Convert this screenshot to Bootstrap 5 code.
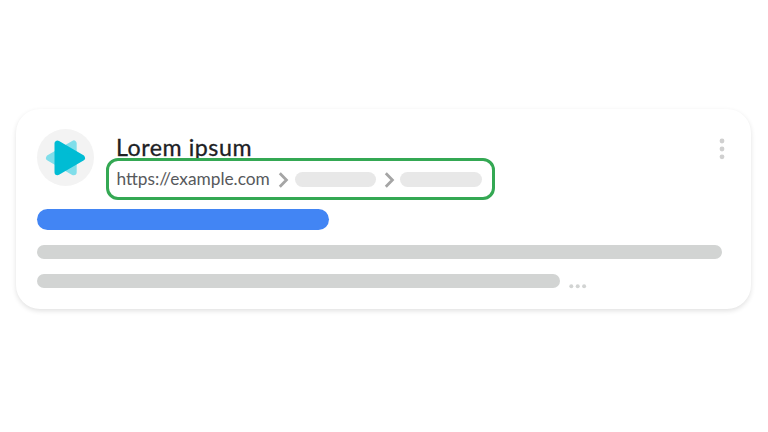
<!DOCTYPE html>
<html lang="en">
<head>
<meta charset="utf-8">
<meta name="viewport" content="width=device-width, initial-scale=1">
<title>Search result</title>
<link href="https://cdn.jsdelivr.net/npm/bootstrap@5.3.0/dist/css/bootstrap.min.css" rel="stylesheet">
<style>
body{font-family:Lato,"Liberation Sans",sans-serif;background:#fff;padding:109px 0 0 16px}
.result{width:735px;height:200px;border-radius:24px;padding:20px 22px 0 21.4px;box-shadow:0 2px 5px rgba(0,0,0,.12)}
.favicon{width:57px;height:57px;background:#f3f3f3}
.site{width:389px;margin-left:11.6px;height:80px}
.site-name{font-size:23.2px;line-height:28px;height:29px;padding:4px 0 0 10px;color:#202124;letter-spacing:.55px;-webkit-text-stroke:.3px #202124}
.crumbs{height:42px;border:3px solid #34a853;border-radius:12px;padding-left:7.5px}
.url{font-size:17.3px;line-height:20px;color:#57595c;width:154.5px;white-space:nowrap}
.sep{margin:2px 5.5px 0 7.5px}
.crumb{width:81.5px;height:15px;background:#e8e8e8;margin-top:1px}
.kebab{margin:9px 4.5px 0 0}
.heading-bar{width:291.5px;height:21px;background:#4285f4}
.line-bar{height:14px;background:#d2d4d3}
.line-one{width:684.5px;margin-top:15px}
.line-two{width:523px}
.line-row{margin-top:15px}
.more{margin:10px 0 0 9px}
</style>
<script src="https://cdn.jsdelivr.net/npm/bootstrap@5.3.0/dist/js/bootstrap.bundle.min.js"></script>
</head>
<body class="min-vh-100">
<main class="result bg-white">
  <header class="d-flex align-items-start">
    <div class="favicon rounded-circle flex-shrink-0">
      <svg class="d-block" width="57" height="57" viewBox="0 0 57 57" aria-hidden="true">
        <path d="M36.7 14.5V43.3L12 28.9Z" fill="#80deea" stroke="#80deea" stroke-width="6" stroke-linejoin="round"/>
        <path d="M20.5 14.6V43.2L45 28.9Z" fill="#00bcd4" stroke="#00bcd4" stroke-width="6" stroke-linejoin="round"/>
      </svg>
    </div>
    <div class="site flex-shrink-0">
      <div class="site-name text-nowrap">Lorem ipsum</div>
      <div class="crumbs d-flex align-items-center position-relative bg-white">
        <span class="url">https://example.com</span>
        <svg class="sep flex-shrink-0" width="11" height="16" viewBox="0 0 11 16" fill="none" stroke="#a5a5a5" stroke-width="2.8"><path d="M1.8 1.3 8.4 8 1.8 14.7"/></svg>
        <span class="crumb rounded-pill"></span>
        <svg class="sep flex-shrink-0" width="11" height="16" viewBox="0 0 11 16" fill="none" stroke="#a5a5a5" stroke-width="2.8"><path d="M1.8 1.3 8.4 8 1.8 14.7"/></svg>
        <span class="crumb rounded-pill"></span>
      </div>
    </div>
    <svg class="kebab ms-auto" width="6" height="22" viewBox="0 0 6 22" fill="#d0d0d0"><circle cx="3" cy="3" r="2.4"/><circle cx="3" cy="11" r="2.4"/><circle cx="3" cy="18.8" r="2.4"/></svg>
  </header>
  <div class="heading-bar rounded-pill"></div>
  <div class="line-bar line-one rounded-pill"></div>
  <div class="line-row d-flex align-items-start">
    <div class="line-bar line-two rounded-pill"></div>
    <svg class="more" width="18" height="5" viewBox="0 0 18 5" fill="#d2d4d3"><circle cx="2.3" cy="2.3" r="2"/><circle cx="8.7" cy="2.3" r="2"/><circle cx="15.1" cy="2.3" r="2"/></svg>
  </div>
</main>
</body>
</html>
